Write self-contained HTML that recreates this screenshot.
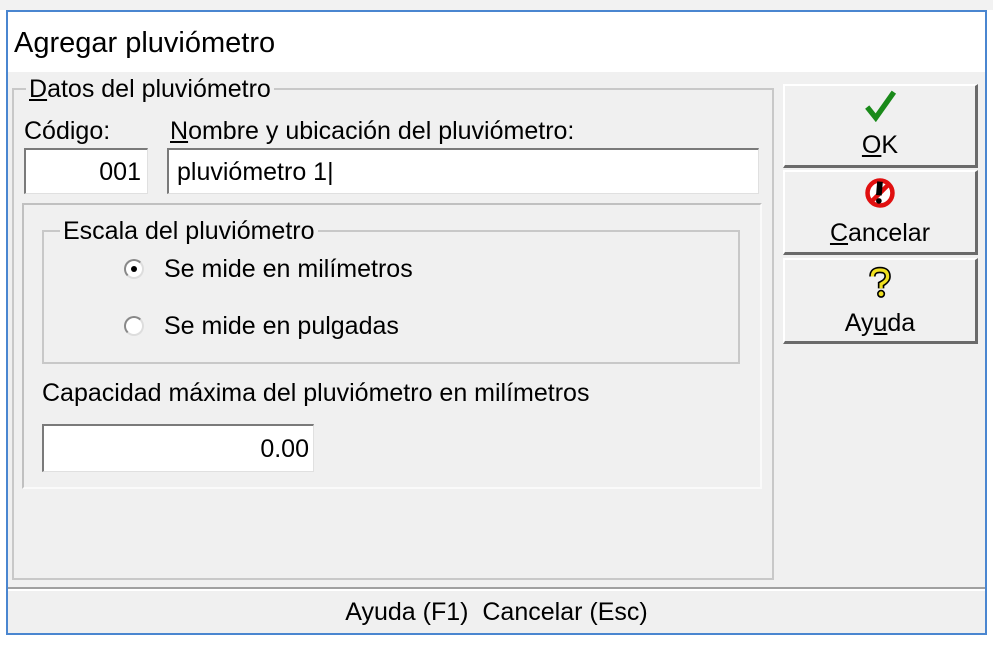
<!DOCTYPE html>
<html><head><meta charset="utf-8"><style>
body{margin:0;width:993px;height:645px;background:#fff;position:relative;overflow:hidden;font-family:"Liberation Sans",sans-serif;color:#000}
.a{position:absolute}
.t{font-size:25px;white-space:nowrap;line-height:28px;transform-origin:0 50%}
.inp{background:#fff;border-top:2px solid #7a7a7a;border-left:2px solid #7a7a7a;border-right:1px solid #e0e0e0;border-bottom:1px solid #e0e0e0;box-sizing:border-box}
.grp{border:2px solid #c8c8c8;box-sizing:border-box}
.btn{background:#f0f0f0;border-top:2px solid #fff;border-left:2px solid #fff;border-right:3px solid #6a6a6a;border-bottom:3px solid #6a6a6a;box-sizing:border-box;text-align:center}
.rad{width:20px;height:20px;border-radius:50%;background:#fff;border:2px solid #888;border-right-color:#ddd;border-bottom-color:#ddd;box-sizing:border-box}
</style></head><body>
<div class="a" style="left:0;top:0;width:993px;height:10px;background:#f2f2f2"></div>
<div class="a" style="left:6px;top:10px;width:981px;height:625px;border:2px solid #4a86d0;box-sizing:border-box;background:#f0f0f0"></div>
<div class="a" style="left:8px;top:12px;width:977px;height:60px;background:#fff"></div>
<div class="a t" style="left:14px;top:26px;font-size:29px;line-height:34px">Agregar pluviómetro</div>

<div class="a grp" style="left:12px;top:88px;width:762px;height:492px"></div>
<div class="a t" style="left:26px;top:75px;background:#f0f0f0;padding:0 3px"><u>D</u>atos del pluviómetro</div>
<div class="a t" style="left:24px;top:117px">Código:</div>
<div class="a t" style="left:170px;top:117px"><u>N</u>ombre y ubicación del pluviómetro:</div>
<div class="a inp t" style="left:24px;top:148px;width:124px;height:46px;text-align:right;padding:8px 6px 0 0">001</div>
<div class="a inp t" style="left:167px;top:148px;width:592px;height:46px;padding:8px 0 0 8px">pluviómetro 1|</div>

<div class="a" style="left:22px;top:203px;width:740px;height:286px;border-top:2px solid #c0c0c0;border-left:2px solid #c0c0c0;border-bottom:2px solid #fafafa;border-right:2px solid #fafafa;box-sizing:border-box"></div>
<div class="a grp" style="left:42px;top:230px;width:698px;height:134px"></div>
<div class="a t" style="left:60px;top:217px;background:#f0f0f0;padding:0 3px">Escala del pluviómetro</div>
<div class="a rad" style="left:124px;top:259px"></div>
<div class="a" style="left:131px;top:266px;width:6px;height:6px;border-radius:50%;background:#000"></div>
<div class="a t" style="left:164px;top:255px">Se mide en milímetros</div>
<div class="a rad" style="left:124px;top:316px"></div>
<div class="a t" style="left:164px;top:312px">Se mide en pulgadas</div>
<div class="a t" style="left:42px;top:379px">Capacidad máxima del pluviómetro en milímetros</div>
<div class="a inp t" style="left:42px;top:424px;width:272px;height:48px;text-align:right;padding:9px 4px 0 0">0.00</div>

<div class="a btn" style="left:783px;top:84px;width:195px;height:84px">
<svg width="32" height="32" viewBox="0 0 30 30" style="display:block;margin:4px auto 0"><path d="M3 16 L11 26 L28 2" stroke="#1a8a1a" stroke-width="5" fill="none"/></svg>
<div class="t" style="margin-top:9px"><u>O</u>K</div></div>
<div class="a btn" style="left:783px;top:170px;width:195px;height:85px">
<svg width="34" height="34" viewBox="0 0 30 30" style="display:block;margin:4px auto 0"><circle cx="15" cy="15" r="11" stroke="#e01010" stroke-width="4" fill="#fff"/><path d="M7 23 L23 7" stroke="#e01010" stroke-width="4"/><path d="M15 5 L14 17" stroke="#000" stroke-width="5"/><circle cx="14" cy="22" r="2.5" fill="#000"/></svg>
<div class="t" style="margin-top:9px"><u>C</u>ancelar</div></div>
<div class="a btn" style="left:783px;top:258px;width:195px;height:86px">
<svg width="26" height="34" viewBox="0 0 24 30" style="display:block;margin:6px auto 0"><path d="M5 9 Q5 3 12 3 Q19 3 19 9 Q19 13 13 16 L13 20" stroke="#000" stroke-width="6" fill="none"/><path d="M5 9 Q5 3 12 3 Q19 3 19 9 Q19 13 13 16 L13 20" stroke="#f0e020" stroke-width="3" fill="none"/><circle cx="13" cy="25" r="3" fill="#f0e020" stroke="#000" stroke-width="1.5"/></svg>
<div class="t" style="margin-top:9px">Ay<u>u</u>da</div></div>

<div class="a" style="left:8px;top:587px;width:977px;height:2px;background:#a0a0a0"></div>
<div class="a" style="left:8px;top:589px;width:977px;height:2px;background:#fff"></div>
<div class="a t" style="left:0;width:993px;text-align:center;top:598px">Ayuda (F1)&nbsp; Cancelar (Esc)</div>
</body></html>
